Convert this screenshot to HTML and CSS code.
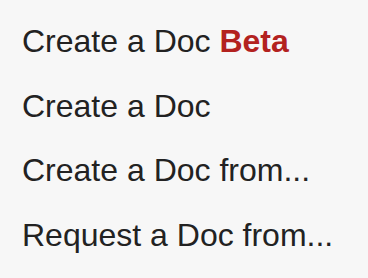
FILE: index.html
```html
<!DOCTYPE html>
<html>
<head>
<meta charset="utf-8">
<link rel="stylesheet" href="styles.css">
</head>
<body>
<ul class="menu">
  <li class="item">Create a Doc <span class="beta">Beta</span></li>
  <li class="item">Create a Doc</li>
  <li class="item">Create a Doc from...</li>
  <li class="item">Request a Doc from...</li>
</ul>
</body>
</html>
```
FILE: styles.css
```css
html, body {
  margin: 0;
  padding: 0;
  background: #f7f7f7;
}
body {
  font-family: "Liberation Sans", Arial, sans-serif;
  color: #222222;
}
.menu {
  list-style: none;
  margin: 0;
  padding: 9px 0 0 22px;
}
.item {
  font-size: 32px;
  line-height: 64.5px;
  white-space: nowrap;
}
.beta {
  color: #b3221f;
  font-weight: bold;
}
```
